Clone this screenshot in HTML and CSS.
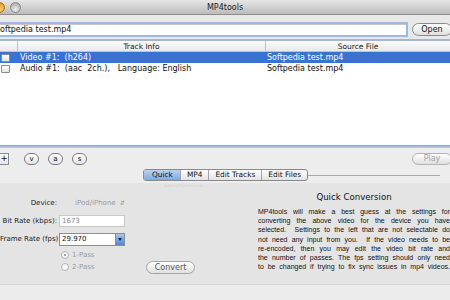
FILE: index.html
```html
<!DOCTYPE html>
<html lang="en">
<head>
  <meta charset="UTF-8">
  <title>MP4tools</title>
  <link rel="stylesheet" href="styles.css">
</head>
<body>
  <div class="window">
    <!-- Title bar -->
    <div class="titlebar">
      <div class="lights">
        <span class="light close"></span>
        <span class="light min"></span>
      </div>
      <span class="title">MP4tools</span>
    </div>

    <!-- File path -->
    <div class="pathbar">
      <div class="path-field"><span class="path-text">Softpedia test.mp4</span></div>
      <button class="pill open-btn">Open</button>
    </div>

    <!-- Track list -->
    <div class="tracks">
      <div class="track-head">
        <div class="col-check"></div>
        <div class="col-info">Track Info</div>
        <div class="col-src">Source File</div>
      </div>
      <div class="track-row selected">
        <div class="col-check"><span class="checkbox"></span></div>
        <div class="col-info">Video #1:&nbsp; (h264)</div>
        <div class="col-src">Softpedia test.mp4</div>
      </div>
      <div class="track-row">
        <div class="col-check"><span class="checkbox"></span></div>
        <div class="col-info">Audio #1:&nbsp; (aac&nbsp; 2ch.),&nbsp;&nbsp; Language: English</div>
        <div class="col-src">Softpedia test.mp4</div>
      </div>
    </div>

    <div class="splitter"></div>

    <!-- Toolbar -->
    <div class="toolbar">
      <div class="tool-left">
        <button class="square-btn">+</button>
        <button class="round-btn">v</button>
        <button class="round-btn">a</button>
        <button class="round-btn">s</button>
      </div>
      <button class="pill play-btn">Play</button>
    </div>

    <!-- Tabs -->
    <div class="tabbar">
      <div class="segments">
        <span class="seg active">Quick</span>
        <span class="seg">MP4</span>
        <span class="seg">Edit Tracks</span>
        <span class="seg">Edit Files</span>
      </div>
    </div>

    <div class="tab-body">
      <div class="watermark">www.softpedia.com</div>
      <div class="quick">
        <div class="form">
          <div class="form-row">
            <span class="label">Device:</span>
            <span class="popup">iPod/iPhone <span class="arrows">&#8693;</span></span>
          </div>
          <div class="form-row">
            <span class="label">Bit Rate (kbps):</span>
            <span class="field disabled">1673</span>
          </div>
          <div class="form-row">
            <span class="label">Frame Rate (fps):</span>
            <span class="combo"><span class="combo-value">29.970</span><span class="combo-btn"></span></span>
          </div>
          <div class="passes">
            <div class="radio-row"><span class="radio on"></span>1-Pass</div>
            <div class="radio-row"><span class="radio"></span>2-Pass</div>
            <button class="pill convert-btn">Convert</button>
          </div>
        </div>

        <div class="info">
          <h2 class="info-title">Quick Conversion</h2>
          <div class="info-text">
            <div class="line">MP4tools will make a best guess at the settings for</div>
            <div class="line">converting the above video for the device you have</div>
            <div class="line">selected.&nbsp; Settings to the left that are not selectable do</div>
            <div class="line">not need any input from you.&nbsp; If the video needs to be</div>
            <div class="line">re-encoded, then you may edit the video bit rate and</div>
            <div class="line">the number of passes. The fps setting should only need</div>
            <div class="line">to be changed if trying to fix sync issues in mp4 videos.</div>
          </div>
        </div>
      </div>
    </div>

    <div class="footer"></div>
  </div>
</body>
</html>
```

FILE: styles.css
```css
* {
  margin: 0;
  padding: 0;
  box-sizing: border-box;
}

body {
  font-family: 'DejaVu Sans', 'Liberation Sans', sans-serif;
  background: #e8e8e8;
  color: #111;
  width: 450px;
  height: 300px;
  overflow: hidden;
}

.window {
  width: 450px;
  height: 300px;
  display: flex;
  flex-direction: column;
  overflow: hidden;
}

/* Title bar */
.titlebar {
  position: relative;
  height: 15px;
  flex-shrink: 0;
  background: linear-gradient(#e6e6e6, #bcbcbc);
  border-bottom: 1px solid #8e8e8e;
  display: flex;
  align-items: center;
  justify-content: center;
}

.lights {
  position: absolute;
  left: -6px;
  top: 2px;
  display: flex;
  gap: 5px;
}

.light {
  width: 11px;
  height: 11px;
  border-radius: 50%;
  border: 1px solid #8a8a8a;
}

.light.close {
  background: radial-gradient(circle at 50% 70%, #ffe08a, #e99a2b 70%);
  border-color: #b06d1d;
}

.light.min {
  background: radial-gradient(circle at 50% 70%, #efefef, #b5b5b5 70%);
}

.title {
  font-size: 8px;
  color: #222;
}

/* Path bar */
.pathbar {
  height: 24px;
  flex-shrink: 0;
  display: flex;
  align-items: center;
  padding: 5px 2px 0 0;
  gap: 4px;
}

.path-field {
  flex: 1;
  height: 15px;
  background: #fff;
  border: 2px solid #9ab9e3;
  border-left: none;
  box-shadow: inset 0 1px 0 #c8c8c8;
  display: flex;
  align-items: center;
  overflow: hidden;
}

.path-text {
  font-size: 8px;
  margin-left: -5px;
  white-space: nowrap;
}

.pill {
  font-family: inherit;
  font-size: 8px;
  height: 13px;
  border-radius: 7px;
  border: 1px solid #8a8a8a;
  background: linear-gradient(#ffffff, #e0e0e0);
  color: #111;
}

.open-btn {
  width: 40px;
  margin-right: -4px;
}

/* Track table */
.tracks {
  height: 106px;
  flex-shrink: 0;
  background: #fff;
  border-top: 2px solid #a6b6cc;
}

.track-head {
  display: flex;
  height: 11px;
  background: linear-gradient(#fbfbfb, #e9e9e9);
  border-bottom: 1px solid #c4c4c4;
  font-size: 7.5px;
  color: #222;
}

.track-head > div {
  display: flex;
  align-items: center;
  justify-content: center;
}

.track-head .col-check,
.track-head .col-info {
  border-right: 1px solid #c4c4c4;
}

.col-check {
  width: 18px;
  flex-shrink: 0;
}

.col-info {
  width: 248px;
  flex-shrink: 0;
}

.col-src {
  flex: 1;
}

.track-row {
  display: flex;
  height: 11px;
  align-items: center;
  font-size: 8px;
  white-space: nowrap;
}

.track-row .col-info {
  padding-left: 2px;
}

.track-row .col-src {
  padding-left: 1px;
}

.track-row.selected {
  background: #3a72d4;
  color: #fff;
}

.track-row .col-check {
  display: flex;
  align-items: center;
  padding-left: 1px;
}

.checkbox {
  width: 9px;
  height: 8px;
  border: 1px solid #8c8c8c;
  border-radius: 1px;
  background: linear-gradient(#ffffff, #e4e4e4);
}

.splitter {
  height: 3px;
  flex-shrink: 0;
  background: linear-gradient(#8ea3c0, #c4cfdd);
}

/* Toolbar */
.toolbar {
  height: 19px;
  flex-shrink: 0;
  display: flex;
  align-items: center;
  justify-content: space-between;
  padding-top: 2px;
  background: #ededed;
}

.tool-left {
  display: flex;
  align-items: center;
  gap: 10px;
}

.square-btn {
  width: 9px;
  height: 12px;
  font-family: inherit;
  font-size: 8px;
  line-height: 10px;
  background: linear-gradient(#ffffff, #e6e6e6);
  border: 1px solid #8a8a8a;
  border-left: none;
  margin-right: 5px;
}

.round-btn {
  width: 15px;
  height: 12px;
  border-radius: 6px;
  font-family: inherit;
  font-size: 7px;
  line-height: 10px;
  background: linear-gradient(#ffffff, #e2e2e2);
  border: 1px solid #7c7c7c;
  margin-right: -1px;
}

.play-btn {
  width: 40px;
  height: 12px;
  color: #a0a0a0;
  border-color: #b4b4b4;
  margin-right: -2px;
}

/* Tabs */
.tabbar {
  position: relative;
  height: 16px;
  flex-shrink: 0;
  background: #ededed;
  display: flex;
  align-items: center;
  padding-left: 143px;
}

.tabbar::before {
  content: '';
  position: absolute;
  left: 300px;
  right: 10px;
  top: 8px;
  border-top: 1px solid #a8a8a8;
}

.segments {
  position: relative;
  display: flex;
  height: 12px;
  border: 1px solid #8a8a8a;
  border-radius: 3px;
  overflow: hidden;
  background: linear-gradient(#ffffff, #e3e3e3);
}

.seg {
  font-size: 7.4px;
  padding: 0 6px;
  line-height: 10px;
  border-left: 1px solid #a4a4a4;
  color: #111;
}

.seg:first-child {
  border-left: none;
}

.seg.active {
  background: linear-gradient(#b9d3f3, #7fa9e0);
  padding: 0 7px 0 8px;
}

.tab-body {
  position: relative;
  height: 102px;
  flex-shrink: 0;
  background: #e4e4e4;
  border-bottom: 1px solid #dadada;
}

.watermark {
  position: absolute;
  left: 164px;
  top: 0;
  font-size: 4px;
  color: #d2d2d2;
}

.quick {
  display: flex;
  height: 100%;
}

/* Left form */
.form {
  width: 250px;
  flex-shrink: 0;
  padding-top: 11px;
  position: relative;
}

.form-row {
  display: flex;
  align-items: center;
  height: 18px;
  font-size: 7px;
}

.label {
  width: 59px;
  text-align: right;
  padding-right: 2px;
  white-space: nowrap;
  color: #222;
}

.popup {
  margin-left: 16px;
  color: #9a9a9a;
}

.arrows {
  font-size: 6px;
  margin-left: 2px;
}

.field {
  width: 66px;
  height: 12px;
  background: #fff;
  border: 1px solid #c9c9c9;
  display: flex;
  align-items: center;
  padding-left: 2px;
  color: #888;
}

.combo {
  display: flex;
  width: 66px;
  height: 13px;
  border: 1px solid #8e8e8e;
  background: #fff;
}

.combo-value {
  flex: 1;
  display: flex;
  align-items: center;
  padding-left: 2px;
  color: #111;
}

.combo-btn {
  width: 9px;
  background: linear-gradient(#a9c8f0, #4f86d6);
  border-left: 1px solid #6f8fc0;
  position: relative;
}

.combo-btn::after {
  content: '';
  position: absolute;
  left: 2px;
  top: 4px;
  border-left: 2px solid transparent;
  border-right: 2px solid transparent;
  border-top: 3px solid #0d1e3a;
}

.passes {
  padding-left: 61px;
  padding-top: 1px;
  position: relative;
}

.radio-row {
  display: flex;
  align-items: center;
  height: 12px;
  font-size: 7px;
  color: #9a9a9a;
}

.radio {
  width: 8px;
  height: 8px;
  border: 1px solid #b2b2b2;
  border-radius: 50%;
  background: #f7f7f7;
  margin-right: 3px;
  position: relative;
}

.radio.on::after {
  content: '';
  position: absolute;
  left: 2px;
  top: 2px;
  width: 2px;
  height: 2px;
  border-radius: 50%;
  background: #888;
}

.convert-btn {
  position: absolute;
  left: 146px;
  top: 13px;
  width: 49px;
  height: 13px;
  color: #555;
  border-color: #a6a6a6;
}

/* Right info */
.info {
  flex: 1;
  padding: 9px 0 0 8px;
  min-width: 0;
}

.info-title {
  font-size: 8.6px;
  font-weight: normal;
  text-align: center;
  color: #111;
  margin-bottom: 5px;
}

.info-text {
  font-family: 'Liberation Sans', sans-serif;
  font-size: 7px;
  line-height: 9.2px;
  color: #111;
}

.line {
  white-space: nowrap;
  text-align: justify;
  text-align-last: justify;
}

.footer {
  flex: 1;
  background: #ececec;
}
```
